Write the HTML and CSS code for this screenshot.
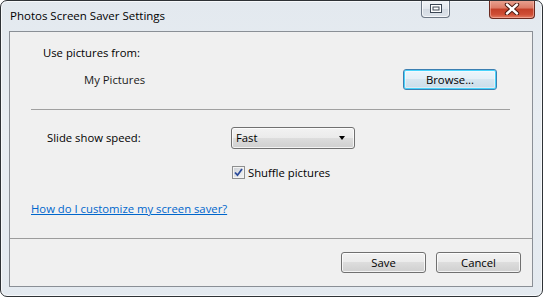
FILE: index.html
```html
<!DOCTYPE html>
<html>
<head>
<meta charset="utf-8">
<link rel="stylesheet" href="styles.css">
</head>
<body>
<div class="window">
  <div class="titlebar">
    <div class="title">Photos Screen Saver Settings</div>
    <div class="caption-btn restore">
      <svg width="12" height="9" viewBox="0 0 12 9"><rect x="0.5" y="0.5" width="11" height="8" fill="#fff" stroke="#3b4654"/><rect x="3" y="3" width="6" height="3" fill="none" stroke="#3b4654" stroke-width="1"/></svg>
    </div>
    <div class="caption-btn close">
      <svg width="16" height="12" viewBox="0 0 16 12"><path d="M3 1.5 L13 10.5 M13 1.5 L3 10.5" stroke="#4a1a12" stroke-width="4.4" stroke-linecap="round"/><path d="M3 1.5 L13 10.5 M13 1.5 L3 10.5" stroke="#fff" stroke-width="2.4" stroke-linecap="round"/></svg>
    </div>
  </div>
  <div class="client">
    <div class="main">
      <div class="row-label">Use pictures from:</div>
      <div class="row-source">
        <span class="source-name">My Pictures</span>
        <button class="btn btn-default">Browse...</button>
      </div>
      <div class="separator"></div>
      <div class="row-speed">
        <span class="speed-label">Slide show speed:</span>
        <div class="combo"><span>Fast</span><span class="combo-arrow"></span></div>
      </div>
      <label class="row-check">
        <span class="checkbox">
          <svg width="9" height="9" viewBox="0 0 9 9"><path d="M1 4.5 L3.5 7.2 L8 1" fill="none" stroke="#2a4a9a" stroke-width="1.8"/></svg>
        </span>
        <span>Shuffle pictures</span>
      </label>
      <a class="help-link" href="#">How do I customize my screen saver?</a>
    </div>
    <div class="footer">
      <button class="btn">Save</button>
      <button class="btn">Cancel</button>
    </div>
  </div>
</div>
</body>
</html>
```
FILE: styles.css
```css
html, body {
  margin: 0;
  padding: 0;
  background: #ffffff;
}
body {
  width: 543px;
  height: 297px;
  font-family: "Open Sans", "Noto Sans", sans-serif;
  font-size: 11.3px;
  color: #000;
}
.window {
  box-sizing: border-box;
  width: 543px;
  height: 297px;
  border: 1px solid #2e3236;
  border-radius: 7px;
  background: linear-gradient(180deg, #e3e9ef 0%, #e8edf2 40%, #e4eaf0 100%);
  display: flex;
  flex-direction: column;
  overflow: hidden;
  box-shadow: inset 0 0 0 1px #f7f9fb;
}
.titlebar {
  height: 30px;
  display: flex;
  align-items: flex-start;
  flex-shrink: 0;
}
.title {
  padding: 7px 0 0 9px;
  font-size: 11.5px;
  line-height: 16px;
  color: #000;
  flex: 1;
}
.caption-btn {
  box-sizing: border-box;
  height: 19px;
  margin-top: -1px;
  border: 1px solid #6d7885;
  border-top: none;
  border-radius: 0 0 4px 4px;
  display: flex;
  align-items: center;
  justify-content: center;
}
.restore {
  width: 29px;
  height: 18px;
  background: linear-gradient(180deg, #f3f5f8 0%, #e3e8ee 50%, #d3dae2 51%, #dde3ea 100%);
  box-shadow: inset 0 0 0 1px rgba(255,255,255,0.7);
}
.close {
  width: 46px;
  margin-left: 39px;
  margin-right: 7px;
  border-color: #6a2a20;
  background: linear-gradient(180deg, #e9a594 0%, #dc7a65 45%, #c33f28 50%, #cf4e35 80%, #e27d63 100%);
  box-shadow: inset 0 0 0 1px rgba(255,200,190,0.5);
}
.client {
  flex: 1;
  margin: 0 9px 9px 8px;
  border: 1px solid #8a8f96;
  background: #f0f0f0;
  display: flex;
  flex-direction: column;
}
.main {
  flex: 1;
  display: flex;
  flex-direction: column;
  align-items: flex-start;
}
.row-label {
  margin: 13px 0 0 33px;
  line-height: 16px;
}
.row-source {
  align-self: stretch;
  margin-top: 8px;
  padding: 0 35px 0 74px;
  display: flex;
  align-items: center;
  justify-content: space-between;
  height: 21px;
  color: #1a1a1a;
}
.btn {
  box-sizing: border-box;
  font-family: inherit;
  font-size: 11.3px;
  color: #000;
  height: 21px;
  width: 85px;
  padding: 0;
  border: 1px solid #707070;
  border-radius: 3px;
  background: linear-gradient(180deg, #f2f2f2 0%, #ebebeb 48%, #dddddd 50%, #cfcfcf 100%);
  box-shadow: inset 0 0 0 1px rgba(255,255,255,0.75);
}
.btn-default {
  width: 94px;
  border-color: #3c7fb1;
  box-shadow: inset 0 0 0 1px #48d3fb, inset 0 0 0 2px rgba(255,255,255,0.4);
  background: linear-gradient(180deg, #eaf6fd 0%, #e4eff6 48%, #d6e6f0 50%, #c9dce9 100%);
}
.separator {
  align-self: stretch;
  margin: 19px 22px 0 21px;
  height: 1px;
  background: #a0a0a0;
}
.row-speed {
  margin-top: 17px;
  padding-left: 37px;
  display: flex;
  align-items: center;
  height: 21px;
}
.speed-label {
  width: 184px;
}
.combo {
  box-sizing: border-box;
  width: 124px;
  height: 22px;
  border: 1px solid #707070;
  border-radius: 3px;
  background: linear-gradient(180deg, #f2f2f2 0%, #ebebeb 48%, #dddddd 50%, #cfcfcf 100%);
  box-shadow: inset 0 0 0 1px rgba(255,255,255,0.75);
  display: flex;
  align-items: center;
  justify-content: space-between;
  padding: 0 9px 0 4px;
}
.combo-arrow {
  width: 0;
  height: 0;
  border-left: 3.5px solid transparent;
  border-right: 3.5px solid transparent;
  border-top: 4px solid #000;
}
.row-check {
  margin: 17px 0 0 222px;
  display: flex;
  align-items: center;
  gap: 3px;
  height: 14px;
}
.checkbox {
  box-sizing: border-box;
  width: 13px;
  height: 13px;
  border: 1px solid #8e8f8f;
  background: linear-gradient(135deg, #cbcfd5 0%, #f6f6f6 100%);
  box-shadow: inset 0 0 0 1px #f4f4f4;
  display: flex;
  align-items: center;
  justify-content: center;
}
.help-link {
  margin: 22px 0 0 21px;
  line-height: 16px;
  color: #0066cc;
  text-decoration: underline;
}
.footer {
  height: 48px;
  border-top: 1px solid #9c9c9c;
  display: flex;
  justify-content: flex-end;
  align-items: flex-start;
  gap: 10px;
  padding: 13px 11px 0 0;
  box-sizing: border-box;
  flex-shrink: 0;
}
```
